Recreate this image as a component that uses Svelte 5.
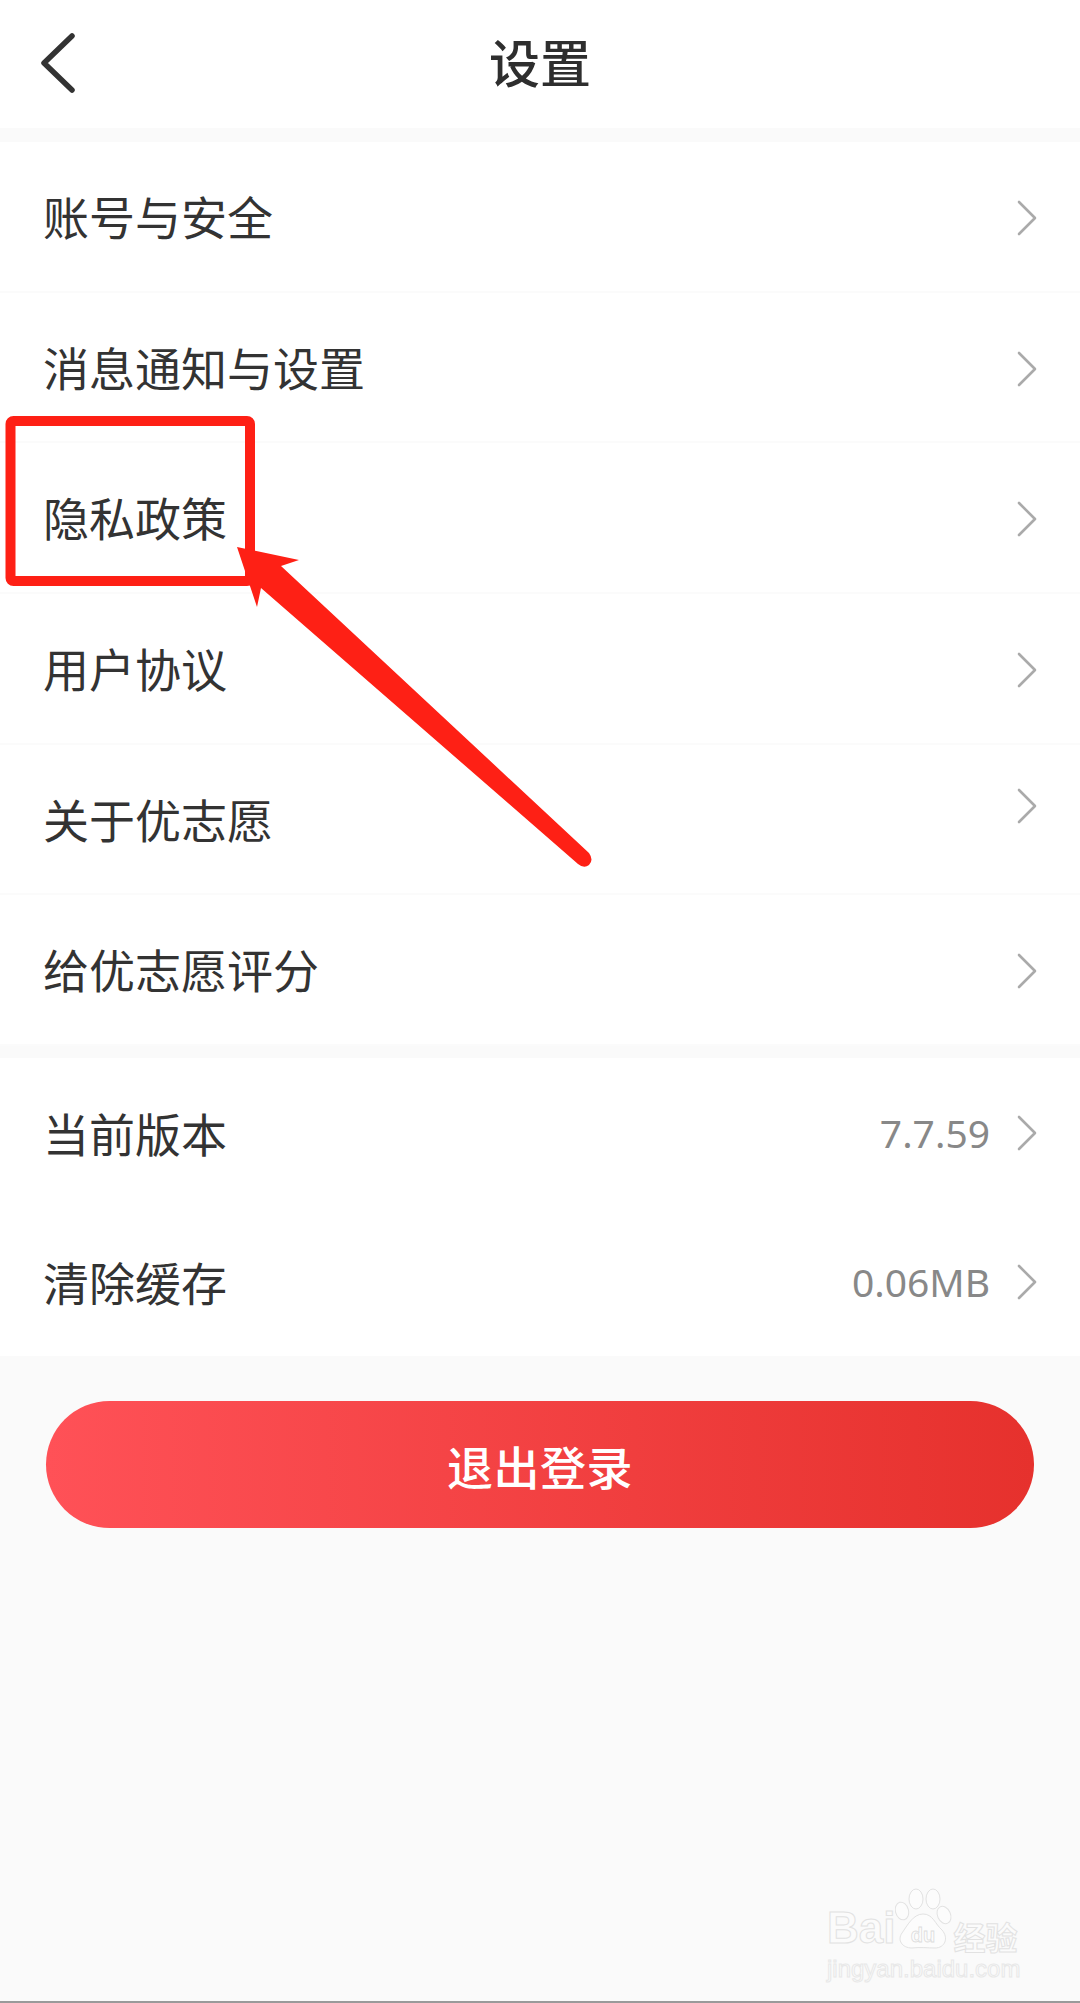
<script lang="ts">
  const mainRows = [
    { label: '账号与安全' },
    { label: '消息通知与设置' },
    { label: '隐私政策' },
    { label: '用户协议' },
    { label: '关于优志愿', raised: true },
    { label: '给优志愿评分' }
  ]
  const infoRows = [
    { label: '当前版本', value: '7.7.59' },
    { label: '清除缓存', value: '0.06MB' }
  ]
</script>

{#snippet chevron(raised = false)}
  <svg class="chevron" class:raised viewBox="0 0 20 36" aria-hidden="true">
    <path d="M2 2 L18 18 L2 34" />
  </svg>
{/snippet}

<div class="page">
  <header class="topbar">
    <svg class="back" viewBox="0 0 34 60" aria-hidden="true">
      <path d="M31 3 L3 30 L31 57" />
    </svg>
    <h1>设置</h1>
  </header>

  <section class="group first">
    {#each mainRows as row}
      <div class="row ruled">
        <span class="label">{row.label}</span>
        {@render chevron(row.raised)}
      </div>
    {/each}
  </section>

  <section class="group second">
    {#each infoRows as row}
      <div class="row">
        <span class="label">{row.label}</span>
        <span class="value">{row.value}</span>
        {@render chevron()}
      </div>
    {/each}
  </section>

  <button class="logout">退出登录</button>

  <svg class="markup" viewBox="0 0 1080 2003" aria-hidden="true">
    <rect x="10.5" y="421" width="239.5" height="160" rx="3" />
    <path class="arrow" d="M237 547 L299 560 L281 566 L589 853 Q594 860 589 865 Q584 869 578 864 L261 588 L257 607 Z" />
  </svg>

  <div class="watermark" aria-hidden="true">
    <div class="brand">
      <span class="word">Bai</span>
      <svg class="paw" viewBox="0 0 58 62">
        <ellipse cx="21" cy="11" rx="7" ry="10" />
        <ellipse cx="38" cy="11" rx="7" ry="10" />
        <ellipse cx="7" cy="23" rx="6.5" ry="9" transform="rotate(-15 7 23)" />
        <ellipse cx="49" cy="27" rx="6.5" ry="9" transform="rotate(-25 49 27)" />
        <path d="M28 26 C38 26 40 36 47 42 C54 50 50 60 40 60 C33 60 25 59 17 60 C7 60 2 52 7 45 C12 38 18 26 28 26 Z" />
        <text x="28" y="54" text-anchor="middle">du</text>
      </svg>
      <span class="word cn">经验</span>
    </div>
    <div class="url">jingyan.baidu.com</div>
  </div>

  <div class="edge"></div>
</div>

<style>
  :global(body) {
    margin: 0;
    background: #fafafa;
  }

  .page {
    position: relative;
    width: 1080px;
    height: 2003px;
    overflow: hidden;
    background: #fafafa;
    font-family: 'Noto Sans CJK SC', 'Noto Sans', sans-serif;
    color: #333;
  }

  .topbar {
    height: 122px;
    padding-bottom: 6px;
    background: #fff;
    display: flex;
    align-items: center;
    justify-content: center;
    position: relative;
  }

  .topbar h1 {
    margin: 0;
    font-size: 51px;
    font-weight: 500;
    color: #2e2e2e;
    line-height: 1;
  }

  .back {
    position: absolute;
    left: 41px;
    top: 33px;
    width: 34px;
    height: 60px;
  }

  .back path {
    fill: none;
    stroke: #333;
    stroke-width: 5.5;
    stroke-linecap: round;
    stroke-linejoin: round;
  }

  .group {
    background: #fff;
  }

  .first {
    margin-top: 14px;
  }

  .second {
    margin-top: 12px;
  }

  .row {
    height: 149px;
    padding: 0 43px 0 43px;
    display: flex;
    align-items: center;
  }

  .ruled {
    height: 150.7px;
    box-sizing: border-box;
    border-bottom: 2px solid #fbfbfb;
  }

  .label {
    flex: 1;
    font-size: 46px;
    line-height: 1;
    margin-bottom: 2px;
  }

  .ruled .label {
    margin-bottom: 3px;
  }

  .value {
    font-family: 'Noto Sans', sans-serif;
    font-size: 39px;
    line-height: 1;
    color: #888;
    margin-right: 27px;
  }

  .chevron {
    width: 20px;
    height: 36px;
    flex: none;
  }

  .chevron path {
    fill: none;
    stroke: #aaa;
    stroke-width: 2.6;
    stroke-linecap: round;
    stroke-linejoin: round;
  }

  .ruled .chevron {
    margin-top: 3px;
  }

  .ruled .chevron.raised {
    margin-top: 0;
    margin-bottom: 26px;
  }

  .logout {
    display: block;
    width: 988px;
    height: 127px;
    margin: 45px 0 0 46px;
    padding: 0;
    border: 0;
    border-radius: 64px;
    background: linear-gradient(90deg, #ff5157, #e6312d);
    color: #fff;
    font: inherit;
    font-size: 46px;
    font-weight: 500;
    letter-spacing: 0.5px;
  }

  .markup {
    position: absolute;
    inset: 0;
    width: 1080px;
    height: 2003px;
    pointer-events: none;
  }

  .markup rect {
    fill: none;
    stroke: #fe2015;
    stroke-width: 10;
  }

  .arrow {
    fill: #fe2015;
  }

  .watermark {
    position: absolute;
    left: 827px;
    top: 1888px;
    width: 200px;
    color: #fbfbfb;
  }

  .brand {
    display: flex;
    align-items: flex-end;
    height: 62px;
  }

  .word {
    font-family: 'Liberation Sans', sans-serif;
    font-weight: 700;
    font-size: 44px;
    line-height: 1;
    -webkit-text-stroke: 1px #e2e2e2;
  }

  .word.cn {
    font-family: 'Noto Sans CJK SC', sans-serif;
    font-size: 32px;
    margin: 0 0 -2px 0;
  }

  .paw {
    width: 58px;
    height: 62px;
    flex: none;
  }

  .paw ellipse,
  .paw path {
    fill: #fcfcfc;
    stroke: #e2e2e2;
    stroke-width: 1;
  }

  .paw text {
    font-family: 'Liberation Sans', sans-serif;
    font-size: 20px;
    font-weight: 700;
    fill: #fcfcfc;
    stroke: #dcdcdc;
    stroke-width: 0.8;
  }

  .url {
    font-family: 'Liberation Sans', sans-serif;
    font-size: 24px;
    line-height: 1;
    margin-top: 7px;
    color: #fbfbfb;
    -webkit-text-stroke: 1px #e8e8e8;
    white-space: nowrap;
  }

  .edge {
    position: absolute;
    left: 0;
    right: 0;
    bottom: 0;
    height: 2px;
    background: #9a9a9a;
  }
</style>
